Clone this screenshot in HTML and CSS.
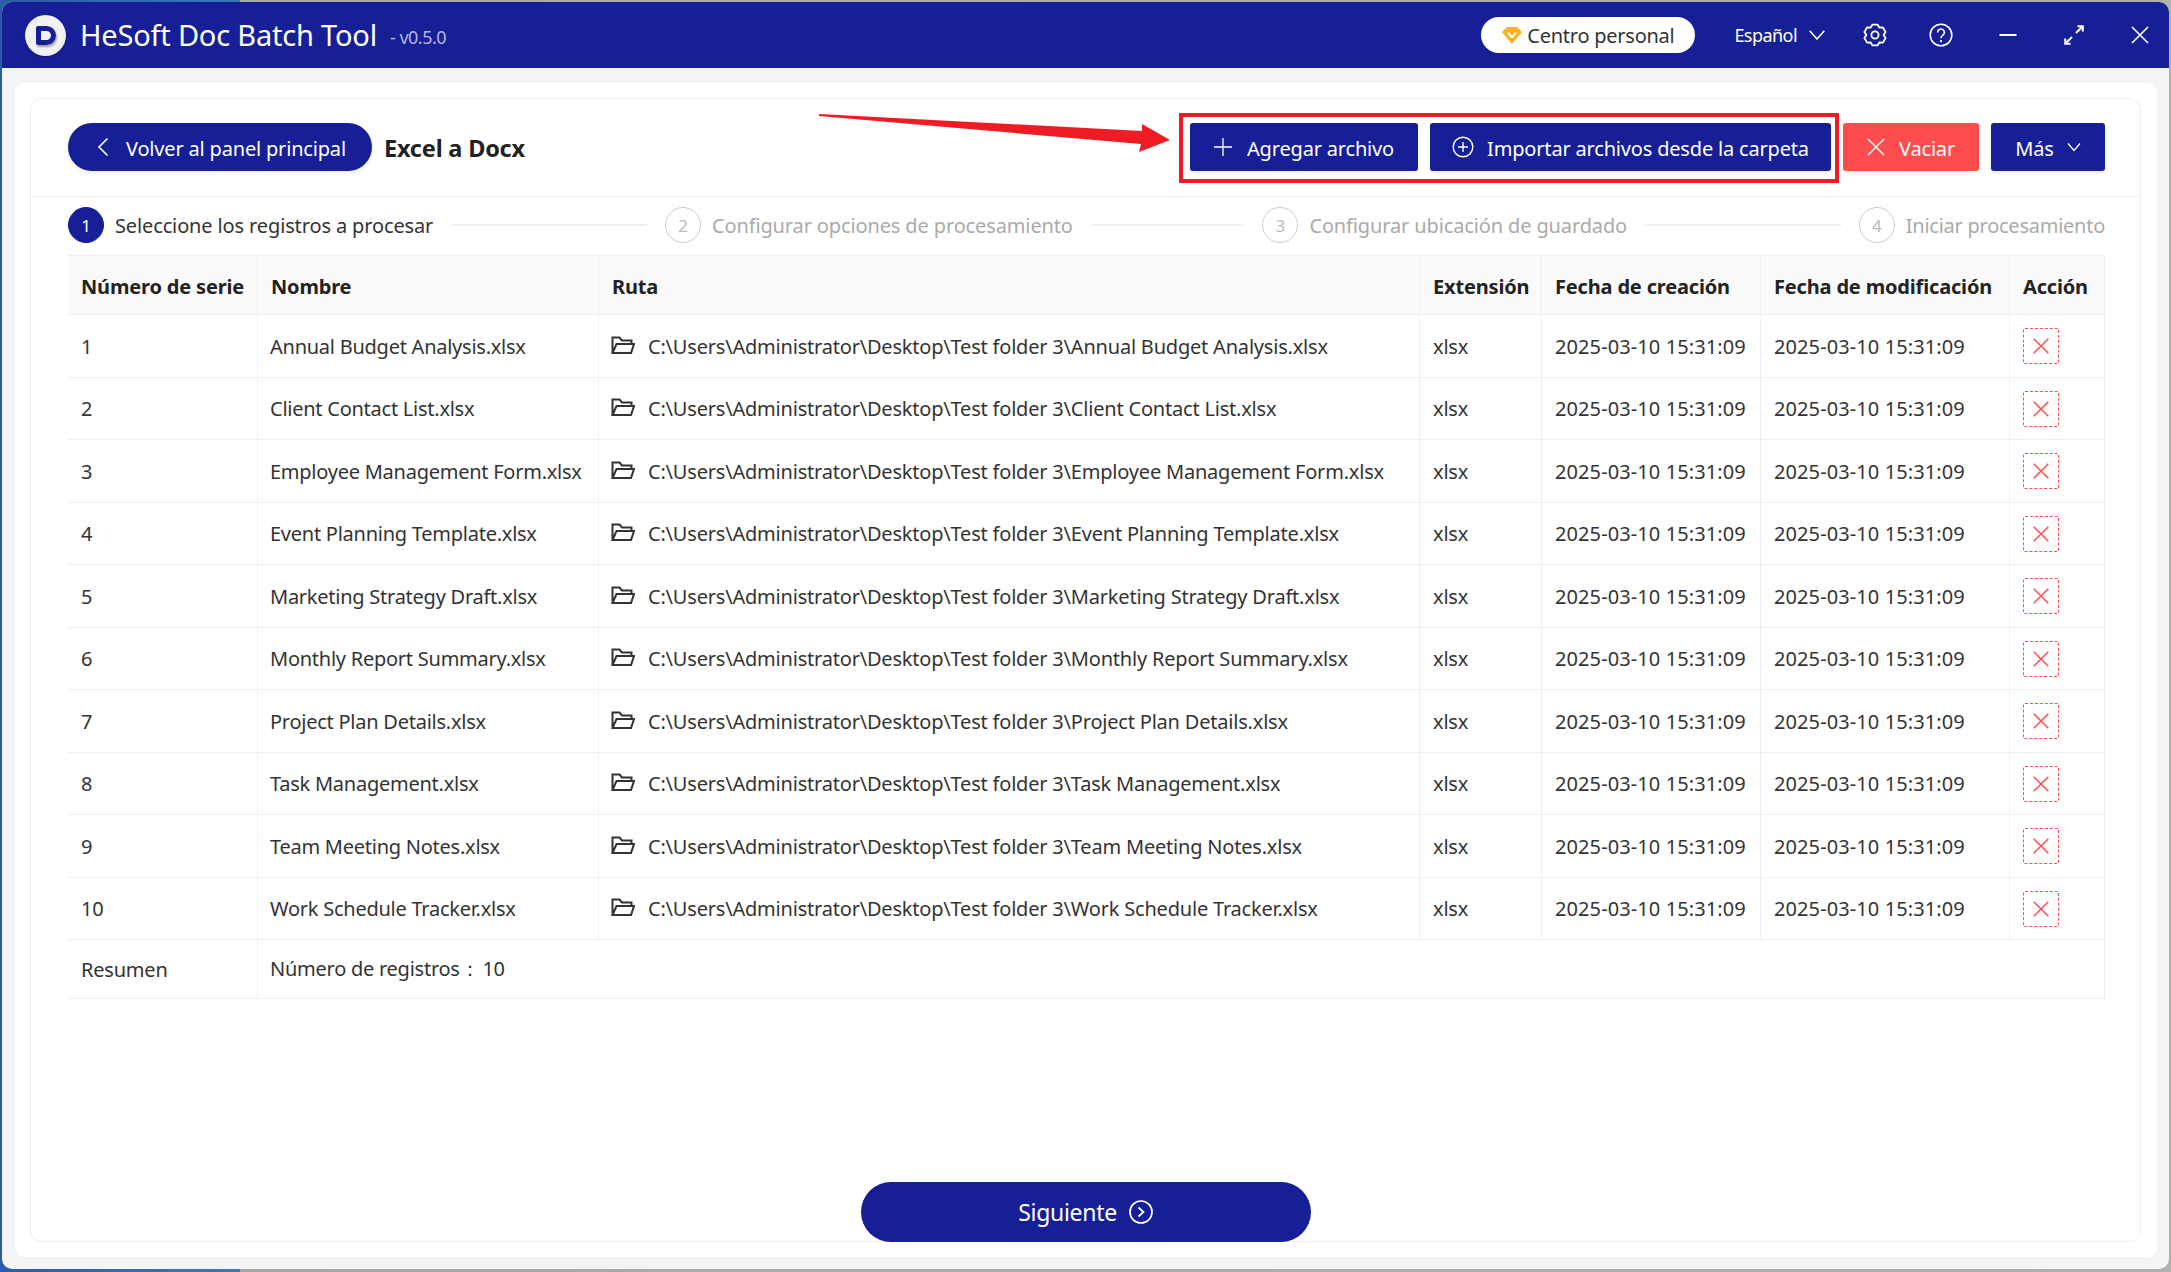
FILE: index.html
```html
<!DOCTYPE html>
<html lang="es">
<head>
<meta charset="utf-8">
<title>HeSoft Doc Batch Tool</title>
<link rel="stylesheet" href="styles.css">
</head>
<body>
<svg class="defs" width="0" height="0" aria-hidden="true">
  <symbol id="folder" viewBox="0 0 24 20"><path d="M1.5 18V2.5h7l2.5 3h9.5V9M1.5 18H20l3-9H5.5L1.5 18z" fill="none" stroke="currentColor" stroke-width="2" stroke-linejoin="miter"/></symbol>
  <symbol id="cross" viewBox="0 0 16 16"><path d="M.7.7l14.6 14.6M15.3.7L.7 15.3" fill="none" stroke="currentColor" stroke-width="1.5"/></symbol>
</svg>
<div class="window">
  <header class="titlebar">
    <div class="logo"><span class="logo-d"></span></div>
    <span class="app-name">HeSoft Doc Batch Tool</span>
    <span class="app-version">- v0.5.0</span>
    <div class="titlebar-right">
      <div class="pill">
        <svg class="gem" viewBox="0 0 22 20"><path d="M5 1h12l5 6-11 13L0 7z" fill="#fdb022"/><path d="M6.5 7.5l4.5 5 4.5-5" fill="none" stroke="#fff" stroke-width="2.2"/></svg>
        <span>Centro personal</span>
      </div>
      <div class="lang">
        <span>Español</span>
        <svg class="lang-chev" viewBox="0 0 16 10"><path d="M.7.7L8 9l7.3-8.3" fill="none" stroke="currentColor" stroke-width="1.5"/></svg>
      </div>
      <div class="win-icons">
        <svg class="win-icon" viewBox="0 0 24 24"><path d="M9.34 1.6h5.32l1.64 2.95 3.6-.2 2.67 4.62-1.97 3.03 1.97 3.03-2.67 4.62-3.6-.2-1.64 2.95H9.34L7.7 19.45l-3.6.2-2.67-4.62L3.4 12 1.43 8.97 4.1 4.35l3.6.2z" fill="none" stroke="currentColor" stroke-width="1.8" stroke-linejoin="round"/><circle cx="12" cy="12" r="3.6" fill="none" stroke="currentColor" stroke-width="1.8"/></svg>
        <svg class="win-icon" viewBox="0 0 24 24"><circle cx="12" cy="12" r="10.8" fill="none" stroke="currentColor" stroke-width="1.6"/><path d="M8.6 9.4a3.4 3.4 0 1 1 5.3 2.8c-1.2.8-1.9 1.5-1.9 3" fill="none" stroke="currentColor" stroke-width="1.6"/><circle cx="12" cy="18.2" r="1.1" fill="currentColor"/></svg>
        <svg class="win-icon" viewBox="0 0 24 24"><path d="M3.5 12h17" fill="none" stroke="currentColor" stroke-width="2"/></svg>
        <svg class="win-icon" viewBox="0 0 24 24"><path d="M14 10l6-6M15.5 3.2h5.3v5.3M10 14l-6 6M8.5 20.8H3.2v-5.3" fill="none" stroke="currentColor" stroke-width="2"/></svg>
        <svg class="win-icon" viewBox="0 0 24 24"><path d="M4 4l16 16M20 4L4 20" fill="none" stroke="currentColor" stroke-width="1.7"/></svg>
      </div>
    </div>
  </header>
  <main class="content">
    <div class="panel">
      <div class="inner">
        <div class="toolbar">
          <button class="btn btn-back">
            <svg class="ico-back" viewBox="0 0 12 20"><path d="M10.5 1.5L2 10l8.500 8.500" fill="none" stroke="currentColor" stroke-width="1.600"/></svg>
            <span>Volver al panel principal</span>
          </button>
          <span class="page-title">Excel a Docx</span>
          <div class="actions">
            <button class="btn btn-add">
              <svg class="ico" viewBox="0 0 18 18"><path d="M9 0v18M0 9h18" fill="none" stroke="currentColor" stroke-width="1.300"/></svg>
              <span>Agregar archivo</span>
            </button>
            <button class="btn btn-import">
              <svg class="ico ico-round" viewBox="0 0 22 22"><circle cx="11" cy="11" r="9.800" fill="none" stroke="currentColor" stroke-width="1.400"/><path d="M11 6v10M6 11h10" fill="none" stroke="currentColor" stroke-width="1.400"/></svg>
              <span>Importar archivos desde la carpeta</span>
            </button>
            <button class="btn btn-clear">
              <svg class="ico" viewBox="0 0 18 18"><path d="M1 1l16 16M17 1L1 17" fill="none" stroke="currentColor" stroke-width="1.500"/></svg>
              <span>Vaciar</span>
            </button>
            <button class="btn btn-more">
              <span>Más</span>
              <svg class="ico-small" viewBox="0 0 14 10"><path d="M1 1.500l6 7 6-7" fill="none" stroke="currentColor" stroke-width="1.300"/></svg>
            </button>
          </div>
        </div>
        <ol class="steps">
          <li class="step step-active"><span class="step-num">1</span><span class="step-label">Seleccione los registros a procesar</span></li>
          <li class="step-line step-line-wide"></li>
          <li class="step"><span class="step-num">2</span><span class="step-label">Configurar opciones de procesamiento</span></li>
          <li class="step-line step-line-mid"></li>
          <li class="step"><span class="step-num">3</span><span class="step-label">Configurar ubicación de guardado</span></li>
          <li class="step-line step-line-wide"></li>
          <li class="step step-last"><span class="step-num">4</span><span class="step-label">Iniciar procesamiento</span></li>
        </ol>
        <table class="grid">
          <colgroup><col class="c1"><col class="c2"><col class="c3"><col class="c4"><col class="c5"><col class="c6"><col class="c7"></colgroup>
          <thead>
            <tr><th>Número de serie</th><th>Nombre</th><th>Ruta</th><th>Extensión</th><th>Fecha de creación</th><th>Fecha de modificación</th><th>Acción</th></tr>
          </thead>
          <tbody>
            <tr><td>1</td><td>Annual Budget Analysis.xlsx</td><td><div class="path"><svg class="folder"><use href="#folder"/></svg><span>C:\Users\Administrator\Desktop\Test folder 3\Annual Budget Analysis.xlsx</span></div></td><td>xlsx</td><td>2025-03-10 15:31:09</td><td>2025-03-10 15:31:09</td><td><span class="del"><svg class="del-x"><use href="#cross"/></svg></span></td></tr>
            <tr><td>2</td><td>Client Contact List.xlsx</td><td><div class="path"><svg class="folder"><use href="#folder"/></svg><span>C:\Users\Administrator\Desktop\Test folder 3\Client Contact List.xlsx</span></div></td><td>xlsx</td><td>2025-03-10 15:31:09</td><td>2025-03-10 15:31:09</td><td><span class="del"><svg class="del-x"><use href="#cross"/></svg></span></td></tr>
            <tr><td>3</td><td>Employee Management Form.xlsx</td><td><div class="path"><svg class="folder"><use href="#folder"/></svg><span>C:\Users\Administrator\Desktop\Test folder 3\Employee Management Form.xlsx</span></div></td><td>xlsx</td><td>2025-03-10 15:31:09</td><td>2025-03-10 15:31:09</td><td><span class="del"><svg class="del-x"><use href="#cross"/></svg></span></td></tr>
            <tr><td>4</td><td>Event Planning Template.xlsx</td><td><div class="path"><svg class="folder"><use href="#folder"/></svg><span>C:\Users\Administrator\Desktop\Test folder 3\Event Planning Template.xlsx</span></div></td><td>xlsx</td><td>2025-03-10 15:31:09</td><td>2025-03-10 15:31:09</td><td><span class="del"><svg class="del-x"><use href="#cross"/></svg></span></td></tr>
            <tr><td>5</td><td>Marketing Strategy Draft.xlsx</td><td><div class="path"><svg class="folder"><use href="#folder"/></svg><span>C:\Users\Administrator\Desktop\Test folder 3\Marketing Strategy Draft.xlsx</span></div></td><td>xlsx</td><td>2025-03-10 15:31:09</td><td>2025-03-10 15:31:09</td><td><span class="del"><svg class="del-x"><use href="#cross"/></svg></span></td></tr>
            <tr><td>6</td><td>Monthly Report Summary.xlsx</td><td><div class="path"><svg class="folder"><use href="#folder"/></svg><span>C:\Users\Administrator\Desktop\Test folder 3\Monthly Report Summary.xlsx</span></div></td><td>xlsx</td><td>2025-03-10 15:31:09</td><td>2025-03-10 15:31:09</td><td><span class="del"><svg class="del-x"><use href="#cross"/></svg></span></td></tr>
            <tr><td>7</td><td>Project Plan Details.xlsx</td><td><div class="path"><svg class="folder"><use href="#folder"/></svg><span>C:\Users\Administrator\Desktop\Test folder 3\Project Plan Details.xlsx</span></div></td><td>xlsx</td><td>2025-03-10 15:31:09</td><td>2025-03-10 15:31:09</td><td><span class="del"><svg class="del-x"><use href="#cross"/></svg></span></td></tr>
            <tr><td>8</td><td>Task Management.xlsx</td><td><div class="path"><svg class="folder"><use href="#folder"/></svg><span>C:\Users\Administrator\Desktop\Test folder 3\Task Management.xlsx</span></div></td><td>xlsx</td><td>2025-03-10 15:31:09</td><td>2025-03-10 15:31:09</td><td><span class="del"><svg class="del-x"><use href="#cross"/></svg></span></td></tr>
            <tr><td>9</td><td>Team Meeting Notes.xlsx</td><td><div class="path"><svg class="folder"><use href="#folder"/></svg><span>C:\Users\Administrator\Desktop\Test folder 3\Team Meeting Notes.xlsx</span></div></td><td>xlsx</td><td>2025-03-10 15:31:09</td><td>2025-03-10 15:31:09</td><td><span class="del"><svg class="del-x"><use href="#cross"/></svg></span></td></tr>
            <tr><td>10</td><td>Work Schedule Tracker.xlsx</td><td><div class="path"><svg class="folder"><use href="#folder"/></svg><span>C:\Users\Administrator\Desktop\Test folder 3\Work Schedule Tracker.xlsx</span></div></td><td>xlsx</td><td>2025-03-10 15:31:09</td><td>2025-03-10 15:31:09</td><td><span class="del"><svg class="del-x"><use href="#cross"/></svg></span></td></tr>
          </tbody>
          <tfoot>
            <tr><td>Resumen</td><td colspan="6">Número de registros：<span class="count">10</span></td></tr>
          </tfoot>
        </table>
        <div class="footer">
          <button class="btn-next">
            <span>Siguiente</span>
            <svg class="ico-next" viewBox="0 0 24 24"><circle cx="12" cy="12" r="11" fill="none" stroke="currentColor" stroke-width="1.700"/><path d="M9.500 7.500l5 4.500-5 4.500" fill="none" stroke="currentColor" stroke-width="1.700"/></svg>
          </button>
        </div>
        <div class="annot-frame"></div>
        <svg class="annot-arrow" viewBox="0 0 352 40"><polygon points="0,0 323,17 323,10 351,26 320,38 322,30 0,2" fill="#ee1c25"/></svg>
      </div>
    </div>
  </main>
</div>
</body>
</html>
```
FILE: styles.css
```css
* { box-sizing: border-box; }
html, body { margin: 0; height: 100%; }
body {
  font-family: "Noto Sans", "Open Sans", sans-serif;
  color: #333;
  overflow: hidden;
  padding: 2px 2px 3px 2px;
  background: linear-gradient(90deg, #2a5da8 0, #3a78b8 240px, #a8a8a8 240px, #b0b0b0 100%);
}
.defs { position: absolute; }
button { font-family: inherit; border: 0; padding: 0; cursor: pointer; }

.window {
  height: 100%;
  display: flex;
  flex-direction: column;
  background: #f4f4f4;
  border-radius: 10px;
  overflow: hidden;
}

.titlebar {
  height: 66px;
  flex: none;
  display: flex;
  align-items: center;
  padding-left: 23px;
  background: #171f96;
  color: #fff;
}
.logo {
  width: 41px;
  height: 41px;
  border-radius: 50%;
  background: #f1f1f1;
  box-shadow: 0 1px 2px rgba(0,0,0,.3);
  display: flex;
  align-items: center;
  justify-content: center;
}
.logo-d {
  width: 20px;
  height: 19px;
  border: 5px solid #171f96;
  border-radius: 2px 10px 10px 2px;
  box-shadow: 1px 2px 2px rgba(0,0,0,.35);
}
.app-name { margin-left: 14px; margin-top: -2px; font-size: 29px; letter-spacing: -.2px; }
.app-version { margin-left: 13px; font-size: 18px; color: #b4b6dd; letter-spacing: -.5px; margin-top: 4px; }
.titlebar-right { margin-left: auto; display: flex; align-items: center; padding-right: 17px; }
.pill {
  width: 214px;
  height: 36px;
  border-radius: 18px;
  background: #fff;
  color: #333;
  display: flex;
  align-items: center;
  justify-content: center;
  gap: 5px;
  font-size: 20px;
  letter-spacing: -.25px;
}
.gem { width: 20px; height: 18px; }
.lang { margin-left: 39px; display: flex; align-items: center; font-size: 18px; letter-spacing: -.55px; }
.lang-chev { width: 16px; height: 10px; margin-left: 12px; }
.win-icons { margin-left: 38px; display: flex; gap: 42.25px; }
.win-icon { width: 24px; height: 24px; display: block; }

.content { flex: 1; padding: 15px 12px 12px 13px; min-height: 0; display: flex; }
.panel { flex: 1; background: #fff; border-radius: 10px; padding: 15px 16px 15px 15px; display: flex; }
.inner {
  flex: 1;
  position: relative;
  border: 1px solid #eeeeee;
  border-radius: 12px;
  display: flex;
  flex-direction: column;
}

.toolbar {
  display: flex;
  align-items: center;
  height: 98px;
  padding: 0 35px 1px 37px;
  border-bottom: 1px solid #eeeeee;
}
.btn {
  height: 48px;
  display: flex;
  align-items: center;
  justify-content: center;
  color: #fff;
  background: #171f96;
  border-radius: 3px;
  font-size: 20px;
  letter-spacing: -.18px;
  box-shadow: 0 2px 4px rgba(0,0,0,.08);
}
.btn span { margin-top: 2px; }
.btn-back { width: 304px; border-radius: 24px; gap: 17px; justify-content: flex-start; padding-left: 29px; }
.ico-back { width: 12px; height: 20px; }
.page-title { margin-left: 12px; margin-top: 2px; font-size: 23.5px; font-weight: 700; color: #222; letter-spacing: -.2px; }
.actions { margin-left: auto; display: flex; gap: 12px; }
.btn-add { width: 228px; gap: 15px; }
.btn-import { width: 401px; gap: 13px; }
.btn-clear { width: 136px; gap: 14px; background: #ff4d4f; }
.btn-more { width: 114px; gap: 13px; }
.ico { width: 18px; height: 18px; }
.ico-round { width: 22px; height: 22px; }
.ico-small { width: 14px; height: 10px; }

.steps {
  list-style: none;
  margin: 10px 0 0;
  padding: 0 35px 0 37px;
  display: flex;
  align-items: center;
  height: 36px;
  font-size: 20px;
  letter-spacing: -.13px;
}
.step { display: flex; align-items: center; gap: 11px; color: #aaa; white-space: nowrap; }
.step-last { letter-spacing: -.25px; }
.step-num {
  width: 36px;
  height: 36px;
  border-radius: 50%;
  border: 1px solid #ccc;
  display: flex;
  align-items: center;
  justify-content: center;
  font-size: 17px;
  color: #bbb;
}
.step-active { color: #333; }
.step-active .step-num { background: #171f96; border-color: #171f96; color: #fff; }
.step-line { height: 2px; background: #f0f0f0; margin: 0 18px; flex-basis: 0; }
.step-line-wide { flex-grow: 195; }
.step-line-mid { flex-grow: 153; }

.grid {
  margin: 12px 0 0 37px;
  width: 2036px;
  table-layout: fixed;
  border-collapse: separate;
  border-spacing: 0;
  font-size: 20px;
  letter-spacing: -.2px;
  border-top: 1px solid #f0f0f0;
  border-right: 1px solid #f0f0f0;
}
.c1 { width: 190px; } .c2 { width: 341px; } .c3 { width: 821px; } .c4 { width: 122px; }
.c5 { width: 219px; } .c6 { width: 249px; } .c7 { width: 94px; }
.grid th, .grid td {
  text-align: left;
  padding: 0 0 0 13px;
  white-space: nowrap;
  border-bottom: 1px solid #f0f0f0;
  border-right: 1px solid #f0f0f0;
  overflow: hidden;
}
.grid td:nth-child(2) { padding-left: 12px; letter-spacing: -.25px; }
.grid tbody td:nth-child(5), .grid tbody td:nth-child(6) { letter-spacing: .1px; }
.grid th:last-child, .grid td:last-child { border-right: 0; }
.grid th { height: 59px; padding-top: 2px; background: #fafafa; font-weight: 700; color: #222; letter-spacing: -.17px; }
.grid tbody tr:nth-child(odd) td { height: 63px; }
.grid tbody tr:nth-child(even) td { height: 62px; }
.grid tfoot td { height: 59px; }
.path { display: flex; align-items: center; gap: 13px; margin-left: -1px; }
.folder { width: 24px; height: 20px; color: #333; flex: none; margin-top: -3px; }
.count { margin-left: 3px; }
.del {
  width: 36px;
  height: 36px;
  display: flex;
  align-items: center;
  justify-content: center;
  border: 1px dashed #ff4d4f;
  border-radius: 2px;
  color: #ff4d4f;
}
.del-x { width: 16px; height: 16px; }

.footer { margin-top: auto; display: flex; justify-content: center; margin-bottom: -1px; }
.btn-next {
  width: 450px;
  height: 60px;
  border-radius: 30px;
  background: #171f96;
  color: #fff;
  font-size: 23px;
  letter-spacing: -.3px;
  display: flex;
  align-items: center;
  justify-content: center;
  gap: 12px;
}
.ico-next { width: 24px; height: 24px; }

.annot-frame {
  position: absolute;
  left: 1148px;
  top: 14px;
  width: 660px;
  height: 70px;
  border: 4px solid #ee1c25;
  pointer-events: none;
}
.annot-arrow {
  position: absolute;
  left: 788px;
  top: 15px;
  width: 352px;
  height: 40px;
}
```
